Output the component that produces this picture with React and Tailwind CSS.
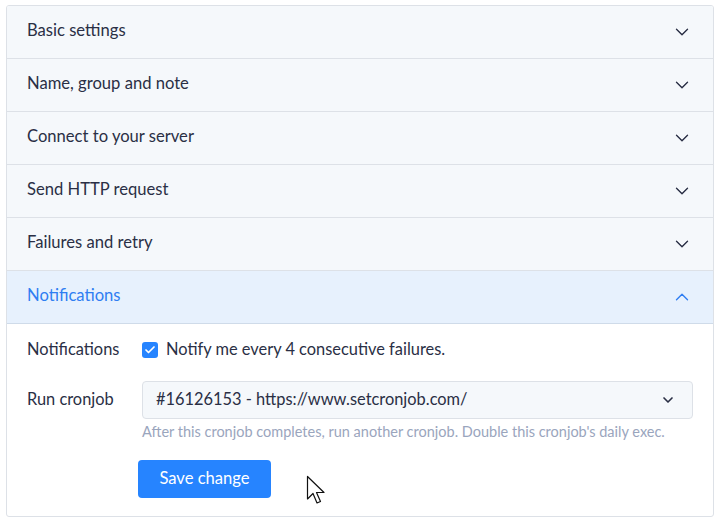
import { ChevronDown, ChevronUp, Check } from "lucide-react";

const sections = [
    "Basic settings",
    "Name, group and note",
    "Connect to your server",
    "Send HTTP request",
    "Failures and retry",
];

function SectionHeader({ title }) {
    return (
        <div className="h-[53px] flex items-center justify-between pl-[20px] pr-[20px] pb-[3px] border-b border-[#dde1e7] bg-[#f5f8fb]">
            <span className="text-[16.6px] text-[#2a2f45]">{title}</span>
            <ChevronDown size={22} strokeWidth={1.5} className="text-[#2a2f45] mt-[2px]" />
        </div>
    );
}

export default function App() {
    return (
        <div className="bg-white w-[722px] h-[525px] pt-[5px] pl-[6px] font-['Lato',sans-serif]">
            <div className="relative w-[708px] h-[512px] border border-[#dde1e7] rounded-[3px] overflow-hidden">
                {sections.map((s) => (
                    <SectionHeader key={s} title={s} />
                ))}

                {/* open section */}
                <div className="h-[53px] flex items-center justify-between pl-[20px] pr-[20px] pb-[3px] border-b border-[#cfdbe9] bg-[#e7f1fd]">
                    <span className="text-[16.6px] text-[#2f7ef2]">Notifications</span>
                    <ChevronUp size={22} strokeWidth={1.5} className="text-[#2f7ef2] mt-[2px]" />
                </div>

                <div className="pl-[20px] pr-[20px] pt-[14px]">
                    <div className="flex items-center h-[22px]">
                        <div className="w-[115px] text-[16.4px] text-[#2a2f45]">Notifications</div>
                        <label className="flex items-center gap-[8px]">
                            <span className="w-[16px] h-[16px] mt-[2px] rounded-[3px] bg-[#2684ff] flex items-center justify-center">
                                <Check size={12} strokeWidth={3.5} className="text-white" />
                            </span>
                            <span className="text-[16.4px] text-[#2a2f45]">Notify me every 4 consecutive failures.</span>
                        </label>
                    </div>

                    <div className="flex items-start mt-[21px]">
                        <div className="w-[115px] h-[36px] flex items-center text-[16.4px] text-[#2a2f45]">Run cronjob</div>
                        <div className="flex-1">
                            <div className="w-[551px] h-[38px] flex items-center justify-between pl-[13px] pr-[16px] pb-[2px] rounded-[4px] border border-[#dde1e7] bg-[#f5f8fb]">
                                <span className="text-[16.4px] text-[#2a2f45]">#16126153 - https://www.setcronjob.com/</span>
                                <ChevronDown size={16} strokeWidth={2.5} className="text-[#2a2f45] mt-[2px]" />
                            </div>
                            <div className="mt-[4px] text-[14.5px] leading-[18px] text-[#9aa5bd]">
                                After this cronjob completes, run another cronjob. Double this cronjob's daily exec.
                            </div>
                        </div>
                    </div>

                    <div className="mt-[19px] pl-[111px] flex items-center">
                        <button className="w-[133px] h-[38px] pb-[1px] rounded-[4px] bg-[#2684ff] text-white text-[16.6px]">
                            Save change
                        </button>
                    </div>
                </div>

                {/* mouse pointer */}
                <svg
                    className="absolute left-[299px] top-[469px]"
                    width="22"
                    height="32"
                    viewBox="0 0 22 32"
                >
                    <path
                        d="M1.5 1.5 L1.5 24 L7 18.5 L11 28 L14.5 26.5 L10.5 17.5 L18 17.5 Z"
                        fill="white"
                        stroke="#111"
                        strokeWidth="1.2"
                        strokeLinejoin="round"
                    />
                </svg>
            </div>
        </div>
    );
}
